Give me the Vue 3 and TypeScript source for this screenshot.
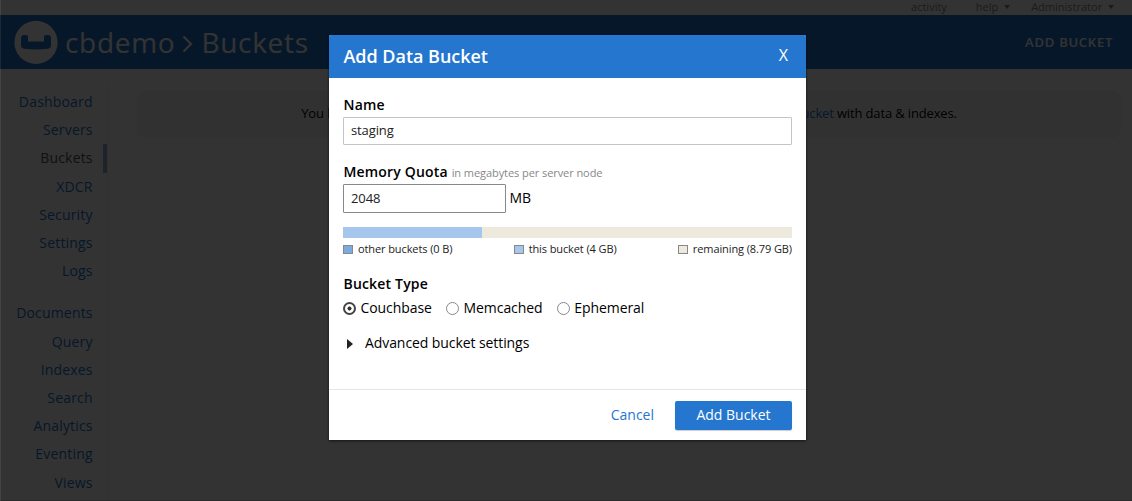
<script setup lang="ts">
const primary: string[] = ['Dashboard', 'Servers', 'Buckets', 'XDCR', 'Security', 'Settings', 'Logs']
const secondary: string[] = ['Documents', 'Query', 'Indexes', 'Search', 'Analytics', 'Eventing', 'Views']
const types: string[] = ['Couchbase', 'Memcached', 'Ephemeral']
const used = 139
const total = 449
</script>

<template>
  <div class="page">
    <div class="topbar">
      <span class="activity">activity</span>
      <span class="help">help <i class="caret" /></span>
      <span>Administrator <i class="caret" /></span>
    </div>
    <header class="header">
      <svg class="logo" width="44" height="44" viewBox="0 0 44 44">
        <circle cx="22" cy="22.400" r="21.600" fill="#fff" />
        <path d="M7 18.300Q7 15 10 15H12.500Q14 15 14 16.500V21.600H30V16.500Q30 15 31.500 15H34Q37 15 37 18.300V25.500Q37 28.300 34 28.700Q22 30.200 10 28.700Q7 28.300 7 25.500Z" fill="#2576cf" />
      </svg>
      <h1 class="title">
        <span class="t1">cbdemo</span>
        <svg class="chev" width="12" height="18" viewBox="0 0 12 18"><path d="M1.500 1.500L9 9L1.500 16.500" fill="none" stroke="#fff" stroke-width="2.200" /></svg>
        <span class="t2">Buckets</span>
      </h1>
      <span class="add">ADD BUCKET</span>
    </header>
    <div class="main">
      <nav class="nav">
        <a v-for="n in primary" :key="n" class="link" :class="{ current: n === 'Buckets' }"><span>{{ n }}</span></a>
        <div class="gap" />
        <a v-for="n in secondary" :key="n" class="link"><span>{{ n }}</span></a>
      </nav>
      <div class="notice">
        <span>You have no data buckets.</span>
        <span class="hint">Go to Add Bucket to create one, or load a <a class="blue">sample bucket</a> with data &amp; indexes.</span>
      </div>
    </div>
    <div class="overlay">
      <section class="dialog">
        <div class="dialog-head"><h2><span>Add Data Bucket</span></h2><span class="close">X</span></div>
        <div class="dialog-body">
          <div class="label name-label"><span>Name</span></div>
          <div class="field name"><span>staging</span></div>
          <div class="label quota-label"><span>Memory Quota</span> <small>in megabytes per server node</small></div>
          <div class="quota"><div class="field mem"><span>2048</span></div><span class="mb">MB</span></div>
          <div class="bar"><div class="fill" :style="{ width: (used / total) * 100 + '%' }" /></div>
          <div class="legend">
            <div><i class="sw other" /><span>other buckets (0 B)</span></div>
            <div><i class="sw this" /><span>this bucket (4 GB)</span></div>
            <div><i class="sw rest" /><span>remaining (8.79 GB)</span></div>
          </div>
          <div class="label type-label"><span>Bucket Type</span></div>
          <div class="radios">
            <div v-for="(t, i) in types" :key="t" class="radio">
              <i class="dot" :class="{ on: i === 0 }" /><span>{{ t }}</span>
            </div>
          </div>
          <div class="advanced"><i class="tri" /><span>Advanced bucket settings</span></div>
        </div>
        <div class="dialog-foot"><a class="cancel">Cancel</a><div class="submit"><span>Add Bucket</span></div></div>
      </section>
    </div>
  </div>
</template>

<style>
body { margin: 0; overflow: hidden; }
</style>

<style scoped>
* { box-sizing: border-box; }
.page { position: relative; width: 1132px; height: 501px; overflow: hidden; background: #fff; font: 14px/20px "Open Sans", sans-serif; color: #000; }
.topbar { height: 15px; display: flex; justify-content: flex-end; padding-right: 18px; font-size: 11px; line-height: 13px; color: #888; }
.help { margin: 0 21px 0 29px; }
.caret { display: inline-block; border: 3.5px solid transparent; border-top: 4px solid #888; border-bottom: 0; margin-left: 3px; vertical-align: 2px; }
.header { height: 54px; background: #2576cf; display: flex; align-items: center; padding: 0 19px 0 14px; color: #fff; }
.title { display: flex; align-items: center; margin: 0 0 0 7px; font-size: 28px; line-height: 54px; font-weight: 400; letter-spacing: 0.7px; }
.chev { margin: 3px 7px 0 7px; }
.add { margin-left: auto; font-size: 13px; font-weight: 600; letter-spacing: 0.75px; }
.main { display: flex; align-items: flex-start; }
.nav { width: 108px; height: 417px; margin-top: 15px; padding-top: 4px; border-right: 1px solid #eee; }
.link { display: flex; align-items: center; justify-content: flex-end; height: 28.2px; padding-right: 14.3px; color: #2576cf; letter-spacing: 0.18px; }
.current { color: #555; border-right: 4px solid #93aed2; padding-right: 10.3px; }
.gap { height: 14px; }
.notice { flex: 1; display: flex; justify-content: center; gap: 44px; margin: 22px 11px 0 29px; height: 47px; line-height: 45px; border-radius: 8px; background: #f5f5f5; font-size: 13px; letter-spacing: -0.12px; white-space: nowrap; }
.hint { letter-spacing: -0.15px; }
.blue { color: #2576cf; }
.overlay { position: absolute; inset: 0; background: rgba(0, 0, 0, 0.8); display: flex; justify-content: center; align-items: flex-start; padding: 35px 0 0 3px; box-shadow: inset 1px 0 rgba(255, 255, 255, 0.08), inset 0 -1px rgba(0, 0, 0, 0.15); }
.dialog { width: 477px; height: 405px; background: #fff; border-radius: 2px 2px 0 0; overflow: hidden; box-shadow: 0 1px 3px rgba(0, 0, 0, 0.6); }
.dialog-head { height: 43px; background: #2576cf; color: #fff; display: flex; justify-content: space-between; align-items: center; padding: 0 18px 0 14.5px; }
h2 { margin: -2px 0 0; font-size: 18px; font-weight: 600; letter-spacing: -0.03px; }
.close { font-size: 16px; margin-top: -3px; }
.dialog-body { height: 311px; padding: 17px 14px 0; }
.label { font-weight: 600; height: 20px; padding-left: 0.5px; white-space: nowrap; letter-spacing: 0.18px; }
.label small { font-size: 11px; font-weight: 400; color: #888; letter-spacing: -0.07px; }
.field { height: 28px; border: 1px solid #c4c4c4; border-radius: 1px; padding: 0 7px 2px; display: flex; align-items: center; font-size: 13px; letter-spacing: -0.12px; color: #222; }
.name { margin-top: 2px; }
.quota-label { margin-top: 17px; }
.quota { display: flex; align-items: center; gap: 3.5px; margin-top: 2px; }
.mem { width: 163px; height: 29px; border-color: #888; }
.mb { margin-top: -2px; }
.bar { height: 11px; margin-top: 14px; background: #ede9dc; }
.fill { height: 100%; background: #a5c6ed; }
.legend { display: flex; justify-content: space-between; height: 15px; font-size: 11px; line-height: 13px; margin-top: 4px; color: #222; letter-spacing: -0.1px; }
.legend div { display: flex; align-items: flex-start; gap: 5px; }
.sw { width: 10px; height: 9px; margin-top: 3px; border: 1px solid #888; }
.other { background: #7aace2; }
.this { background: #a5c6ed; }
.rest { background: #ede9dc; }
.type-label { margin-top: 17px; }
.radios { display: flex; gap: 14.3px; margin-top: 4px; letter-spacing: -0.08px; }
.radio { display: flex; align-items: center; gap: 4.5px; }
.dot { width: 13px; height: 13px; border: 1px solid #888; border-radius: 50%; }
.on { border: 2px solid #444; background: radial-gradient(circle, #333 0 1.8px, transparent 2.3px); }
.advanced { display: flex; align-items: center; margin-top: 15px; padding-left: 4px; letter-spacing: -0.08px; }
.tri { border: 5px solid transparent; border-left: 6px solid #222; border-right: 0; margin-right: 12px; margin-top: 2px; }
.dialog-foot { height: 51px; border-top: 1px solid #e5e5e5; display: flex; justify-content: flex-end; align-items: center; padding: 0 14px; gap: 21px; }
.cancel { color: #2576cf; }
.submit { width: 117px; height: 29px; line-height: 28px; text-align: center; color: #fff; background: #2576cf; border-radius: 2px; box-shadow: 0 1px 1px #ccc; }
</style>
